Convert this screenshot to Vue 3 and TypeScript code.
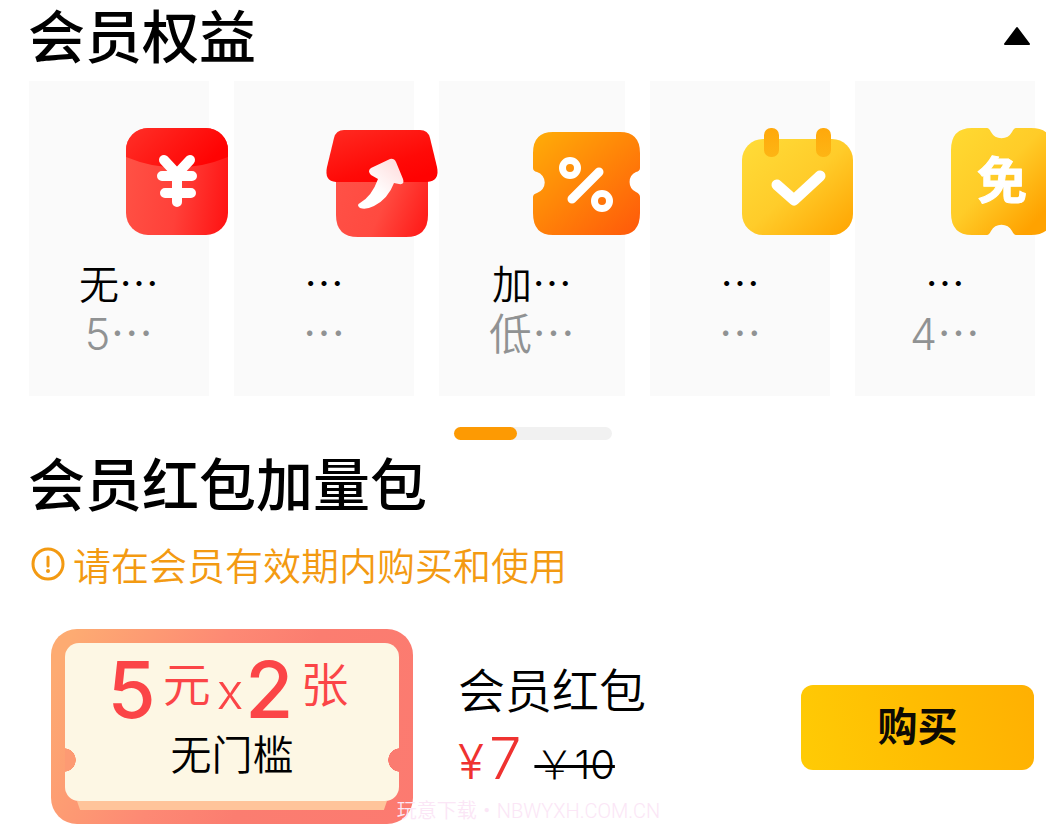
<script setup lang="ts">
import { ref } from 'vue'

type IconName = 'yen' | 'shop' | 'percent' | 'calendar' | 'free'

interface Benefit {
  icon: IconName
  title: string
  note: string
}

const expanded = ref(true)

const benefits: Benefit[] = [
  { icon: 'yen', title: '无', note: '5' },
  { icon: 'shop', title: '', note: '' },
  { icon: 'percent', title: '加', note: '低' },
  { icon: 'calendar', title: '', note: '' },
  { icon: 'free', title: '', note: '4' },
]
</script>

<template>
  <main class="page">
    <section>
      <header class="head">
        <h2>会员权益</h2>
        <button class="toggle" type="button" aria-label="收起" :aria-expanded="expanded" @click="expanded = !expanded">
          <svg viewBox="0 0 28 20" width="28" height="20">
            <path d="M14 2 26 18H2Z" fill="#000" stroke="#000" stroke-width="2" stroke-linejoin="round" />
          </svg>
        </button>
      </header>

      <ul class="benefits">
        <li v-for="(item, i) in benefits" :key="i" class="card">
          <svg class="icon" viewBox="0 0 120 120" width="120" height="120" aria-hidden="true">
            <template v-if="item.icon === 'yen'">
              <defs>
                <linearGradient id="yenBody" x1="0" y1="0.6" x2="1" y2="0.75">
                  <stop offset="0" stop-color="#ff5044" />
                  <stop offset="0.5" stop-color="#ff4039" />
                  <stop offset="1" stop-color="#ff1414" />
                </linearGradient>
                <linearGradient id="yenFlap" x1="0" y1="0" x2="1" y2="0.4">
                  <stop offset="0" stop-color="#ff3028" />
                  <stop offset="1" stop-color="#ff0303" />
                </linearGradient>
                <clipPath id="yenClip"><rect x="7" y="6" width="102" height="107" rx="22" /></clipPath>
              </defs>
              <rect x="7" y="6" width="102" height="107" rx="22" fill="url(#yenBody)" />
              <path d="M7 6H109V35Q58 56 7 35Z" fill="url(#yenFlap)" clip-path="url(#yenClip)" />
              <path d="M45 38 58 52 71 38M43 54H73M46 71H72M58 53V80" fill="none" stroke="#fff" stroke-width="10" stroke-linecap="round" stroke-linejoin="round" />
            </template>

            <template v-else-if="item.icon === 'shop'">
              <defs>
                <linearGradient id="shopBody" x1="0" y1="0.4" x2="1" y2="0.7">
                  <stop offset="0" stop-color="#ff5046" />
                  <stop offset="0.5" stop-color="#ff4a40" />
                  <stop offset="1" stop-color="#ff1d1a" />
                </linearGradient>
                <linearGradient id="shopRoof" x1="0" y1="0" x2="0.7" y2="1">
                  <stop offset="0" stop-color="#ff2b22" />
                  <stop offset="0.7" stop-color="#ff0a07" />
                  <stop offset="1" stop-color="#ff0202" />
                </linearGradient>
                <linearGradient id="shopArrow" x1="0" y1="1" x2="0.8" y2="0">
                  <stop offset="0.4" stop-color="#fff" />
                  <stop offset="1" stop-color="#ffdede" />
                </linearGradient>
              </defs>
              <path d="M12 50H104V93Q104 115 82 115H34Q12 115 12 93Z" fill="url(#shopBody)" />
              <path d="M20 8H96Q104 8 106 16L113 45Q116 59 103 60H12Q0 59 3 45L10 16Q12 8 20 8Z" fill="url(#shopRoof)" />
              <path d="M47 46 66 37Q70 36 72 40L79 57Q81 63 75 62L70 61Q64 77 50 84Q42 88 36 86Q32 83 36 81Q48 74 54 57L47 53Q43 49 47 46Z" fill="url(#shopArrow)" />
            </template>

            <template v-else-if="item.icon === 'percent'">
              <defs>
                <linearGradient id="pctBody" x1="0" y1="0" x2="0.9" y2="1">
                  <stop offset="0" stop-color="#ffad08" />
                  <stop offset="0.5" stop-color="#ff8508" />
                  <stop offset="1" stop-color="#ff5c0a" />
                </linearGradient>
              </defs>
              <path d="M24 10H91Q111 10 111 31V46Q111 49 107 50A11 11 0 0 0 107 70Q111 72 111 75V91Q111 113 91 113H24Q4 113 4 91V75Q4 72 8 71A11 11 0 0 0 8 50Q4 49 4 46V31Q4 10 24 10Z" fill="url(#pctBody)" />
              <g fill="none" stroke="#fff" stroke-linecap="round">
                <circle cx="41" cy="46" r="7.5" stroke-width="7" />
                <circle cx="73" cy="79" r="7.5" stroke-width="7" />
                <path d="M43 77 70 50" stroke-width="9" />
              </g>
            </template>

            <template v-else-if="item.icon === 'calendar'">
              <defs>
                <linearGradient id="calBody" x1="0" y1="0" x2="1" y2="1">
                  <stop offset="0" stop-color="#ffdc38" />
                  <stop offset="0.5" stop-color="#ffcc2a" />
                  <stop offset="1" stop-color="#ffa300" />
                </linearGradient>
                <linearGradient id="calPin" x1="0" y1="0" x2="0" y2="1">
                  <stop offset="0" stop-color="#ffa80b" />
                  <stop offset="1" stop-color="#fdb514" />
                </linearGradient>
              </defs>
              <rect x="2" y="17" width="111" height="96" rx="21" fill="url(#calBody)" />
              <rect x="24" y="6" width="15" height="29" rx="7" fill="url(#calPin)" />
              <rect x="76" y="6" width="15" height="29" rx="7" fill="url(#calPin)" />
              <path d="M37 63 54 78 80 54" fill="none" stroke="#fff" stroke-width="11" stroke-linecap="round" stroke-linejoin="round" />
            </template>

            <template v-else>
              <defs>
                <linearGradient id="freeBody" x1="0" y1="0" x2="1" y2="1">
                  <stop offset="0" stop-color="#ffda32" />
                  <stop offset="0.45" stop-color="#ffcc28" />
                  <stop offset="0.85" stop-color="#ffa200" />
                </linearGradient>
              </defs>
              <path d="M27 6H42Q44 6 46 10A12 12 0 0 0 67 10Q69 6 71 6H86Q108 6 108 28V91Q108 113 86 113H71Q69 113 67 109A12 12 0 0 0 46 109Q44 113 42 113H27Q6 113 6 91V28Q6 6 27 6Z" fill="url(#freeBody)" />
              <text class="free" x="57" y="77" text-anchor="middle">免</text>
            </template>
          </svg>
          <p class="title">{{ item.title }}…</p>
          <p class="note"><span>{{ item.note }}</span>…</p>
        </li>
      </ul>

      <div class="pager">
        <div class="track"><span class="thumb"></span></div>
      </div>
    </section>

    <section>
      <header class="head">
        <h2>会员红包加量包</h2>
      </header>
      <p class="tip">
        <svg viewBox="0 0 36 36" width="36" height="36" aria-hidden="true">
          <circle cx="18" cy="18" r="15" fill="none" stroke="#f39a12" stroke-width="3" />
          <path d="M18 11V20" stroke="#f39a12" stroke-width="3" stroke-linecap="round" />
          <circle cx="18" cy="25" r="2" fill="#f39a12" />
        </svg>
        <span>请在会员有效期内购买和使用</span>
      </p>

      <div class="offer">
        <div class="coupon">
          <div class="ticket">
            <p class="amount"><b>5</b><span>元</span><i>x</i><b>2</b><span>张</span></p>
            <p class="limit">无门槛</p>
          </div>
          <div class="lip"></div>
        </div>
        <div class="info">
          <h3>会员红包</h3>
          <p class="price"><span class="now"><small>¥</small>7</span><del>￥10</del></p>
        </div>
        <button class="buy" type="button">购买</button>
      </div>
    </section>

    <p class="mark">玩意下载・NBWYXH.COM.CN</p>
  </main>
</template>

<style>
body {
  margin: 0;
  background: #fff;
}
</style>

<style scoped>
.page {
  position: relative;
  padding-bottom: 9px;
  color: #000;
  font-family: "Noto Sans CJK SC", sans-serif;
  font-weight: 350;
}
h2, h3, p, ul {
  margin: 0;
  padding: 0;
  font-weight: inherit;
}
button {
  border: 0;
  padding: 0;
  cursor: pointer;
}
.head {
  display: flex;
  align-items: center;
  justify-content: space-between;
  padding: 0 26px 0 28px;
}
h2 {
  margin-bottom: 6px;
  font-size: 57px;
  line-height: 66px;
  font-weight: 500;
}
.toggle {
  display: flex;
  background: none;
}
.benefits {
  display: grid;
  grid-template-columns: 180fr 180fr 186fr 180fr 180fr;
  gap: 25px;
  margin: 9px 11px 0 0;
  padding: 0 11px 0 29px;
  overflow: hidden;
  list-style: none;
}
.card {
  min-width: 0;
  height: 315px;
  box-sizing: border-box;
  padding-top: 41px;
  background: #fafafa;
  text-align: center;
}
.icon {
  display: block;
  margin-left: 90px;
  overflow: visible;
}
.free {
  font-size: 50px;
  font-weight: 700;
  fill: #fff;
  stroke: #fff;
  stroke-linejoin: round;
}
.title {
  margin-top: 16px;
  font-size: 40px;
  line-height: 49px;
}
.note {
  color: #909293;
  font-size: 43px;
  line-height: 49px;
}
.note span {
  font-family: Inter, "Noto Sans CJK SC", sans-serif;
}
.pager {
  padding: 31px 20px 8px 29px;
}
.track {
  width: 158px;
  height: 13px;
  margin: 0 auto;
  border-radius: 7px;
  background: #f1f1f1;
}
.thumb {
  display: block;
  width: 40%;
  height: 100%;
  border-radius: 7px;
  background: #fd9a03;
}
.tip {
  display: flex;
  align-items: center;
  gap: 7px;
  margin-top: 16px;
  padding-left: 30px;
  color: #f39a12;
  font-size: 38px;
  line-height: 56px;
}
.offer {
  display: flex;
  align-items: center;
  margin-top: 37px;
  padding: 0 23px 0 51px;
}
.coupon {
  width: 362px;
  box-sizing: border-box;
  padding: 14px;
  border-radius: 26px;
  background: linear-gradient(115deg, #fdab72 5%, #fd8974 40%, #fb7d70 60%, #fc7a70);
}
.ticket {
  height: 158px;
  border-radius: 14px;
  background:
    radial-gradient(circle 12px at -1px 117px, #fd9a73 96%, transparent),
    radial-gradient(circle 12px at calc(100% + 1px) 117px, #fb7b70 96%, transparent),
    #fdf7e4;
  text-align: center;
}
.lip {
  height: 9px;
  margin: 0 12px;
  background: #ffc49a;
  clip-path: polygon(0 0, 100% 0, 99% 100%, 1% 100%);
}
.amount {
  display: flex;
  align-items: center;
  justify-content: center;
  gap: 2px;
  height: 86px;
  padding-right: 4px;
  color: #fb4547;
  font-size: 48px;
  line-height: 80px;
}
.amount b {
  padding-top: 8px;
  font-family: Inter, "Noto Sans CJK SC", sans-serif;
  font-size: 78px;
  font-weight: 500;
}
.amount span {
  padding: 0 4px 10px 5px;
}
.amount i {
  padding-top: 10px;
  font-family: Inter, sans-serif;
  font-size: 50px;
  font-style: normal;
  font-weight: 300;
}
.limit {
  font-size: 41px;
  line-height: 46px;
}
.info {
  flex: 1;
  padding: 4px 0 0 45px;
}
h3 {
  font-size: 47px;
  line-height: 66px;
}
.price {
  display: flex;
  align-items: baseline;
  gap: 13px;
  font-family: Inter, "Noto Sans CJK SC", sans-serif;
  line-height: 74px;
}
.now {
  color: #ef3230;
  font-size: 58px;
}
.now small {
  margin-right: 5px;
  font-size: 48px;
}
.price del {
  font-size: 40px;
  font-weight: 300;
  text-decoration-thickness: 3px;
}
.buy {
  width: 233px;
  height: 85px;
  margin-top: 2px;
  padding-bottom: 8px;
  border-radius: 12px;
  background: linear-gradient(75deg, #ffcb05, #ffbd02 50%, #ffb002);
  color: #0d0a04;
  font-family: "Noto Sans CJK SC", sans-serif;
  font-size: 40px;
  font-weight: 700;
}
.mark {
  position: absolute;
  bottom: 8px;
  left: 0;
  width: 100%;
  color: #fbe6f6;
  font-family: Roboto, "Noto Sans CJK SC", sans-serif;
  font-size: 20px;
  line-height: 28px;
  text-align: center;
}
</style>
